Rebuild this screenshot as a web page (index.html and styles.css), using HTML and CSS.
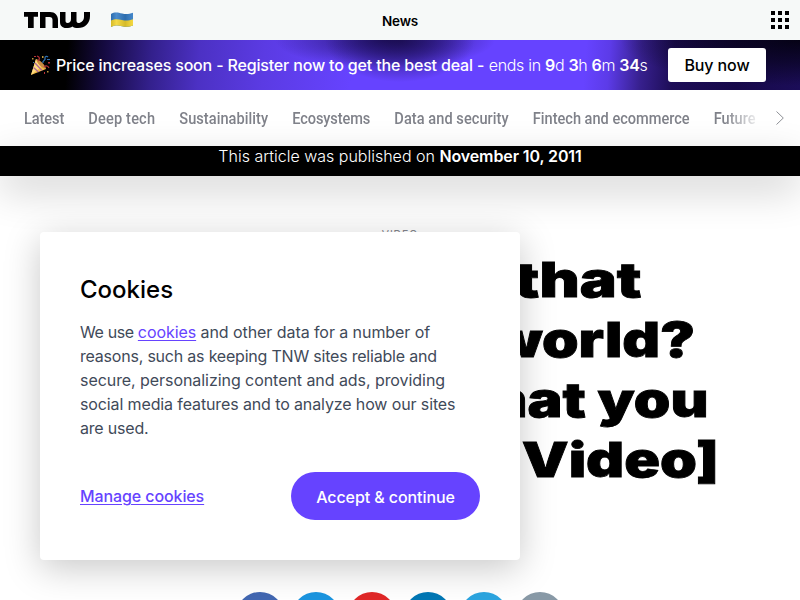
FILE: index.html
```html
<!DOCTYPE html>
<html lang="en">
<head>
<meta charset="utf-8">
<title>TNW | Video</title>
<link rel="stylesheet" href="styles.css">
</head>
<body>
<header class="topbar">
  <div class="brand">
    <svg class="logo" viewBox="0 0 66 16" width="66" height="16" role="img" aria-label="TNW">
      <path d="M0 0H14V4.800H9.700V16H4V4.800H0Z"/>
      <path d="M16 0H26C31 0 34 3.500 34 8V16H28.500V8C28.500 6 27.500 5 25.500 5H21.500V16H16Z"/>
      <path d="M36 0H41.500V8.500C41.500 10.300 42.300 11 43.500 11C45.500 11 47 9.500 47 7V0H52.500V8.500C52.500 10.300 53.300 11 54.500 11C57 11 60 8.500 60 5V0H66V4C66 11.500 61 16 54 16C51.500 16 49.500 15.500 48.500 14.500C47 15.500 44.800 16 42 16C38.300 16 36 13.500 36 10Z"/>
    </svg>
    <svg class="flag" viewBox="0 0 22 16" width="22" height="16" aria-hidden="true">
      <defs>
        <linearGradient id="shade"><stop offset="0" stop-color="#000" stop-opacity=".12"/><stop offset=".25" stop-color="#fff" stop-opacity=".12"/><stop offset=".65" stop-color="#000" stop-opacity=".12"/><stop offset="1" stop-color="#fff" stop-opacity=".08"/></linearGradient>
        <clipPath id="wave"><path d="M0 2C4-.5 7 .6 11 1.500C15 2.400 18 2.200 22 .8V13.500C18 15.300 14 15 11 14.200C7 13.100 4 13.300 0 15Z"/></clipPath>
      </defs>
      <g clip-path="url(#wave)">
        <path fill="#327cc5" d="M0 0H22V16H0Z"/>
        <path fill="#f2d42e" d="M0 8.500C4 6.500 7 7 11 8C15 9 18 8.700 22 7.200V16H0Z"/>
        <path fill="url(#shade)" d="M0 0H22V16H0Z"/>
      </g>
    </svg>
  </div>
  <span class="section">News</span>
  <svg class="apps" viewBox="0 0 18 18" width="18" height="18" aria-hidden="true"><path d="M0 0h4v4H0zM7 0h4v4H7zM14 0h4v4h-4zM0 7h4v4H0zM7 7h4v4H7zM14 7h4v4h-4zM0 14h4v4H0zM7 14h4v4H7zM14 14h4v4h-4z"/></svg>
</header>
<div class="promo">
  <svg class="party" viewBox="0 0 21 21" width="21" height="21" aria-hidden="true">
    <path fill="#f5bd48" d="M1 20L6 4C10 6 15 11 16 14Z"/>
    <path fill="#ffdc82" d="M1 20L6 4C7 7 9 10 11 12Z"/>
    <path stroke="#ad6797" stroke-width="1.300" fill="none" d="M3.500 12.500L8.500 17M5 8L12 15.500"/>
    <ellipse cx="11" cy="9" rx="1.700" ry="6.200" fill="#c98c45" transform="rotate(-44 11 9)"/>
    <path fill="none" stroke="#b93238" stroke-width="1.200" d="M7 1C10 2 10 4 8 6M14 12C16 10 18 11 19 13"/>
    <path fill="none" stroke="#2f6fae" stroke-width="1.300" d="M13 8C12 5 16 6 15 3C15 1 17 1 18 2"/>
    <path fill="#b9953a" d="M2 3h1.500v1.500H2zM17 16h1.500v1.500H17zM12 1h1.500v2H12z"/>
    <path fill="#b93238" d="M4 1h2v1H4zM18 7h2v1.500h-2zM14 17h1v2h-1z"/>
    <path fill="#2f6fae" d="M3 7h1v1H3zM17 4h3v1h-3z"/>
  </svg>
  <p class="promo-text"><span class="promo-lead">Price increases soon - Register now to get the best deal -</span> <span class="countdown">ends in <b>9</b>d <b>3</b>h <b>6</b>m <b>34</b>s</span></p>
  <a class="buy">Buy now</a>
</div>
<nav class="nav">
  <div class="nav-view">
    <div class="nav-list">
      <a class="n1">Latest</a><a class="n2">Deep tech</a><a class="n3">Sustainability</a><a class="n4">Ecosystems</a><a class="n5">Data and security</a><a class="n6">Fintech and ecommerce</a><a class="n7">Future</a>
    </div>
  </div>
  <svg class="next" viewBox="0 0 8 14" width="8" height="14" aria-hidden="true"><path d="M.5.5L7.300 7L.5 13.500" fill="none" stroke="#8e9096" stroke-width="1"/></svg>
</nav>
<div class="notice"><p><span class="notice-lead">This article was published on</span> <b>November 10, 2011</b></p></div>
<main class="article">
  <p class="kicker">VIDEO</p>
  <h1 class="headline"><span class="h-a">that</span><span class="h-b">world?</span><span class="h-c">hat you</span><span class="h-d">[Video]</span></h1>
  <div class="share"><i class="fb"></i><i class="tw"></i><i class="fl"></i><i class="li"></i><i class="tg"></i><i class="ml"></i></div>
</main>
<section class="cookies">
  <h2>Cookies</h2>
  <p class="copy"><span class="c1"><span class="c0">We use </span><a>cookies</a> and other data for a number of</span><span class="c2">reasons, such as keeping TNW sites reliable and</span><span class="c3">secure, personalizing content and ads, providing</span><span class="c4">social media features and to analyze how our sites</span><span class="c5">are used.</span></p>
  <div class="actions"><a class="manage">Manage cookies</a><button class="accept">Accept &amp; continue</button></div>
</section>
</body>
</html>
```
FILE: styles.css
```css
* { box-sizing: border-box; }
html { overflow: hidden; }
body { margin: 0; height: 600px; overflow: hidden; position: relative; background: #fff; font-family: Inter, "Liberation Sans", sans-serif; font-size: 16px; color: #000; }
p, h1, h2 { margin: 0; }
b { font-weight: 600; }
.topbar { height: 40px; background: #f6f9f8; display: grid; grid-template-columns: 1fr auto 1fr; align-items: center; padding: 0 11px 0 24px; }
.brand { display: flex; align-items: center; gap: 21px; }
.logo, .flag, .apps, .party, .next { display: block; flex: none; }
.section { font-size: 13.5px; font-weight: 600; line-height: 20px; letter-spacing: -.2px; padding-top: 2px; margin-right: 13px; }
.apps { justify-self: end; }
.promo { height: 50px; display: flex; align-items: center; padding: 0 34px 0 30px; color: #fff; overflow: hidden;
  background:
    radial-gradient(ellipse 75px 42px at 400px 0, rgba(22,10,70,.75) 0, rgba(26,13,86,.5) 45%, rgba(60,36,170,0) 100%),
    radial-gradient(ellipse 110px 28px at 385px 0, rgba(22,10,76,.8) 0, rgba(36,19,110,.5) 50%, rgba(80,50,210,0) 100%),
    radial-gradient(ellipse 180px 46px at 800px 0, rgba(3,1,14,.9) 0, rgba(5,2,20,.55) 50%, rgba(10,4,40,0) 100%),
    linear-gradient(94deg, #000 0, #000 8.500%, #150a40 13%, #33208c 19%, #4c31c4 25%, #5b3be3 33%, #6643ff 44%, #6643ff 73%, #5c3be8 76%, #37208e 80%, #1d0d57 84%, #17094a 92%, #1b0d58 100%); }
.promo-text { line-height: 24px; margin-left: 5px; white-space: nowrap; flex: 1; }
.promo-lead { font-weight: 500; letter-spacing: -.17px; }
.countdown { font-weight: 300; letter-spacing: -.31px; }
.buy { width: 98px; height: 34px; border-radius: 3px; background: #fff; color: #000; font-weight: 500; line-height: 35px; letter-spacing: -.1px; text-align: center; }
.nav { height: 56px; display: flex; align-items: center; padding: 2px 16px 0 24px; background: #fff; }
.nav-view { width: 735px; overflow: hidden; -webkit-mask-image: linear-gradient(90deg, #000 700px, transparent 738px); mask-image: linear-gradient(90deg, #000 700px, transparent 738px); }
.nav-list { width: 808px; display: flex; gap: 26.5px; white-space: nowrap; color: #7f8189; font-family: Roboto, sans-serif; font-size: 16px; font-weight: 500; line-height: 24px; transform: scaleX(.91); transform-origin: left; }
.nav-list a { flex: none; }
.n1 { letter-spacing: -.1px; }
.n2 { letter-spacing: .2px; }
.n3 { letter-spacing: .06px; }
.n4 { letter-spacing: -.1px; }
.n5 { letter-spacing: .07px; }
.next { margin: -2px 0 0 17px; }
.notice { height: 30px; background: #000; color: #fff; text-align: center; line-height: 20px; box-shadow: 0 14px 40px rgba(0,0,0,.19); }
.notice-lead { font-weight: 300; }
.notice b { letter-spacing: -.11px; }
.article { padding-top: 51px; display: flex; flex-direction: column; align-items: center; }
.kicker { font-size: 10.5px; line-height: 16px; letter-spacing: .9px; color: #83858c; }
.headline { width: 640px; margin-top: 7px; font-size: 48px; line-height: 60px; font-weight: 900; display: flex; flex-direction: column; align-items: flex-end; white-space: nowrap; }
.headline span { transform-origin: right; -webkit-text-stroke: .8px #000; }
.h-a { margin-right: 79px; transform: scaleX(1.29); }
.h-b { margin-right: 25px; transform: scaleX(1.22); }
.h-c { margin-right: 12px; transform: scaleX(1.22); }
.h-d { margin-right: 1px; transform: scaleX(1.23); }
.share { display: flex; gap: 8px; height: 8px; margin-top: 102px; overflow: hidden; }
.share i { width: 48px; height: 48px; border-radius: 50%; }
.fb { background: #4267b2; } .tw { background: #1b95e0; } .fl { background: #e12828; }
.li { background: #0077b5; } .tg { background: #2ca5e0; } .ml { background: #8899a6; }
.cookies { position: absolute; left: 40px; top: 232px; width: 480px; height: 328px; padding: 40px; border-radius: 4px; background: #fff; box-shadow: 0 8px 36px rgba(0,0,0,.22); }
.cookies h2 { font-size: 24px; font-weight: 500; line-height: 36px; }
.copy { margin-top: 12px; line-height: 24px; color: #3f4a59; white-space: nowrap; }
.copy > span { display: block; }
.c0 { letter-spacing: -.38px; }
.c1 { letter-spacing: -.07px; }
.c2 { letter-spacing: -.21px; }
.c3 { letter-spacing: -.06px; }
.c4 { letter-spacing: -.12px; }
.c5 { letter-spacing: -.2px; }
.copy a { color: #6643ff; text-decoration: underline; text-underline-offset: 2px; }
.actions { margin-top: 32px; display: flex; align-items: center; justify-content: space-between; }
.manage { color: #6643ff; font-weight: 500; letter-spacing: -.1px; text-decoration: underline; text-underline-offset: 2px; }
.accept { width: 189px; height: 48px; padding: 2px 0 0; border: 0; border-radius: 24px; background: #6643ff; color: #fff; font: 500 16px Inter, sans-serif; letter-spacing: -.08px; }
```
